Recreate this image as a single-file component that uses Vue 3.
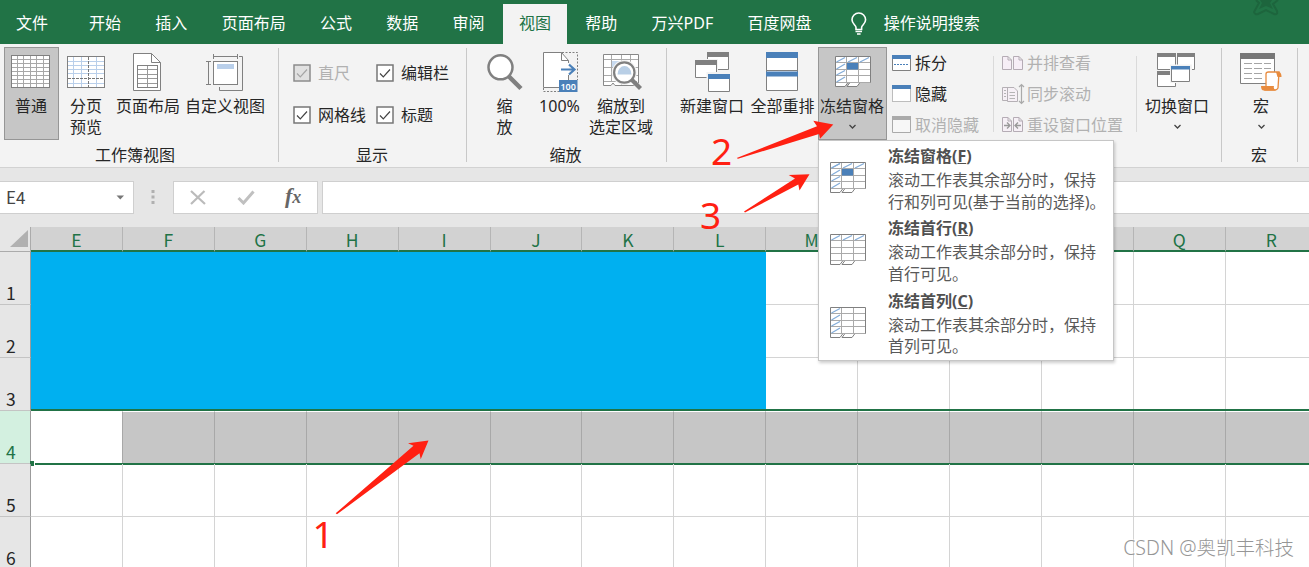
<template>
    <div class="excel">
        <div class="tabs">
            <span
            v-for="tab in tabs"
            :key="tab"
            class="tabs__item"
            :class="{ 'tabs__item--active': tab === activeTab, 'tabs__item--file': tab === '文件' }"
            @click="activeTab = tab"
            >{{ tab }}</span>
            <svg class="tabs__bulb" width="18" height="24" viewBox="0 0 18 24">
                <path d="M6 17.5V15.5C6 13 2 12 2 7.800A6.800 6.800 0 0 1 15.600 7.800C15.600 12 11.600 13 11.600 15.500V17.500Z" fill="none" stroke="#fff" stroke-width="1.600" />
                <path d="M5.500 19.500H12M7 22H10.600" stroke="#fff" stroke-width="1.600" />
            </svg>
            <span class="tabs__search">操作说明搜索</span>
            <svg class="tabs__star" width="34" height="16" viewBox="0 0 34 16">
                <path d="M7 0L10 3L5 12Q6 15 9 14L17 10L25 14Q29 15 28 11L24 4L29 0" fill="none" stroke="#1d653d" stroke-width="2" />
                <path d="M11 0L13 3L10 9L17 6L24 9L21 3L23 0Z" fill="#1d653d" />
            </svg>
        </div>

        <div class="ribbon">
            <!-- 工作簿视图 -->
            <div class="group group--views">
                <div class="group__body">
                    <button class="tool tool--active w55">
                        <svg width="55" height="48" viewBox="0 0 55 48">
                            <rect x="7.500" y="8.500" width="38" height="32" fill="#fff" stroke="#808080" />
                            <path d="M13.500 9V40M19.500 9V40M26.500 9V40M32.500 9V40M39.500 9V40M8 12.500H45M8 16.500H45M8 20.500H45M8 24.500H45M8 28.500H45M8 32.500H45M8 36.500H45" stroke="#a8a8a8" />
                        </svg>
                        <span>普通</span>
                    </button>
                    <button class="tool w54">
                        <svg width="54" height="48" viewBox="0 0 54 48">
                            <rect x="8.500" y="9.500" width="37" height="31" fill="#fff" stroke="#808080" />
                            <path d="M14.500 10V40M22.500 10V40M37.500 10V40M9 14.500H45M9 18.500H45M9 22.500H45M9 26.500H45M9 36.500H45" stroke="#b9cfea" />
                            <path d="M29.500 10V40M9 31.500H45" stroke="#777" stroke-dasharray="3 1" />
                        </svg>
                        <span>分页<br>预览</span>
                    </button>
                    <button class="tool w70">
                        <svg width="70" height="48" viewBox="0 0 70 48">
                            <path d="M20.500 6.500H38.500L47.500 15.500V43.500H20.500Z" fill="#fff" stroke="#808080" />
                            <path d="M38.500 6.500V15.500H47.500" fill="none" stroke="#808080" />
                            <rect x="24.500" y="18.500" width="20" height="22" fill="none" stroke="#808080" />
                            <path d="M34.500 19V40M25 22.500H44M25 27.500H44M25 31.500H44M25 36.500H44" stroke="#999" />
                        </svg>
                        <span>页面布局</span>
                    </button>
                    <button class="tool w84">
                        <svg width="84" height="48" viewBox="0 0 84 48">
                            <path d="M56 9.500H59.500V43.500H36.500V40" fill="none" stroke="#808080" />
                            <rect x="30.500" y="14.500" width="24" height="23" fill="#fff" stroke="#808080" />
                            <rect x="34" y="17" width="17" height="5" fill="#b9cfea" />
                            <path d="M30.500 7V12M54.500 7V12M30.500 9.500H54.500M23 14.500H28M23 37.500H28M25.500 14.500V37.500" stroke="#808080" />
                        </svg>
                        <span>自定义视图</span>
                    </button>
                </div>
                <div class="group__title">工作簿视图</div>
            </div>

            <!-- 显示 -->
            <div class="group group--show">
                <div class="group__body checks">
                    <label
                    v-for="check in checks"
                    :key="check.name"
                    class="check"
                    :class="{ 'check--off': check.disabled }"
                    >
                        <svg width="18" height="18" viewBox="0 0 18 18">
                            <rect class="check__box" x="1" y="1" width="16" height="16" stroke-width="1.500" />
                            <path class="check__mark" d="M4 9.500L7.300 12.800L14 5.500" fill="none" stroke-width="1.200" />
                        </svg>
                        <span>{{ check.name }}</span>
                    </label>
                </div>
                <div class="group__title">显示</div>
            </div>

            <!-- 缩放 -->
            <div class="group group--zoom">
                <div class="group__body">
                    <button class="tool w55">
                        <svg width="55" height="48" viewBox="0 0 55 48">
                            <path d="M31.500 29L44 41.500" stroke="#808080" stroke-width="4.500" />
                            <circle cx="23.500" cy="20.300" r="12" fill="#fff" stroke="#808080" stroke-width="2.500" />
                        </svg>
                        <span>缩<br>放</span>
                    </button>
                    <button class="tool w55">
                        <svg width="55" height="48" viewBox="0 0 55 48">
                            <path d="M11 5H30L37 13V40H11Z" fill="#fff" />
                            <path d="M27 40.500H11.500V5.500H29.500L36.500 13.500V16M29.500 5.500V13.500H36.500M36.500 28V33" fill="none" stroke="#808080" />
                            <path d="M30 5.500H45.500V33M11.500 41V44.500H27" fill="none" stroke="#808080" stroke-dasharray="2 1.500" />
                            <path d="M29 22.500H42M37 17.500L42.500 22.500L37 27.500" fill="none" stroke="#4a80b9" stroke-width="2.200" />
                            <rect x="27" y="33" width="18.500" height="12" fill="#4a80b9" />
                            <text x="36.200" y="42.500" class="icon-text">100</text>
                        </svg>
                        <span>100%</span>
                    </button>
                    <button class="tool w68">
                        <svg width="68" height="48" viewBox="0 0 68 48">
                            <path d="M16.500 7.500H51.500V36L46 38.500H28L26 36L24 38.500H16.500Z" fill="#fff" stroke="#888" />
                            <path d="M24.500 8V35M34.500 8V38M43.500 8V36M17 12.500H51M17 20.500H51M17 28.500H51M17 34.500H50" stroke="#aaa" />
                            <path d="M25 14H34V20H25Z" fill="#c7daf0" />
                            <circle cx="37.300" cy="25.500" r="12.500" fill="#f3f3f3" />
                            <path d="M44 32L53.500 41.500" stroke="#808080" stroke-width="4.200" />
                            <circle cx="37.300" cy="25.500" r="10.200" fill="#fff" stroke="#808080" stroke-width="2.200" />
                            <path d="M30.500 27.500A7 8.500 0 0 1 44.500 27.500Z" fill="#b9cfe6" />
                        </svg>
                        <span>缩放到<br>选定区域</span>
                    </button>
                </div>
                <div class="group__title">缩放</div>
            </div>

            <!-- 窗口 -->
            <div class="group group--window">
                <div class="group__body">
                    <button class="tool w70">
                        <svg width="70" height="48" viewBox="0 0 70 48">
                            <path d="M30.500 5.500H51.500V22.500H30.500Z" fill="#fff" stroke="#808080" />
                            <path d="M30 5H52V10H30Z" fill="#808080" />
                            <path d="M17 12H41V32H17Z" fill="#f3f3f3" />
                            <path d="M18.500 13.500H39.500V30.500H18.500Z" fill="#fff" stroke="#808080" />
                            <path d="M18 13H40V18H18Z" fill="#808080" />
                            <path d="M29.500 25H54V46H29.500Z" fill="#f3f3f3" />
                            <path d="M31.500 27.500H52.500V44.500H31.500Z" fill="#fff" stroke="#808080" />
                            <path d="M31 27H53V32H31Z" fill="#4a80b9" />
                        </svg>
                        <span>新建窗口</span>
                    </button>
                    <button class="tool w71">
                        <svg width="71" height="48" viewBox="0 0 71 48">
                            <path d="M19.500 5.500H50.500V43.500H19.500Z" fill="#fff" stroke="#808080" />
                            <path d="M19 5H51V11H19ZM19 24.500H51V29.500H19Z" fill="#4a80b9" />
                            <path d="M19 23.500H51" stroke="#808080" />
                        </svg>
                        <span>全部重排</span>
                    </button>
                    <button class="tool tool--active w69" @click="menuOpen = !menuOpen">
                        <svg width="69" height="48" viewBox="0 0 69 48">
                            <g transform="translate(17 9)">
                                <path d="M.5 .5H35.500V26.500H25L22 30.500H12L15 26.500H13L10 30.500H.5Z" fill="#fff" stroke="#808080" />
                                <path d="M1 26.500H35M11.500 1V26M23.500 1V26M1 6.500H35M1 13.500H35M1 19.500H35" stroke="#aaa" />
                                <path d="M1.500 6L10 1.500M13 6L22 1.500M25 6L34 1.500M1.500 13L10 8M1.500 19L10 14.500M1.500 26L10 21" stroke="#84add9" stroke-width="1.300" />
                                <path d="M12 7H23V13.500H12Z" fill="#4a80b9" />
                            </g>
                        </svg>
                        <span>冻结窗格</span>
                        <svg class="tool__chevron" width="9" height="6" viewBox="0 0 9 6"><path d="M1.500 1L4.500 4L7.500 1" /></svg>
                    </button>
                    <div class="list list--split">
                        <button class="list__item">
                            <svg width="20" height="18" viewBox="0 0 20 18">
                                <path d="M.5 1.500H18.500V16.500H.5Z" fill="#fff" stroke="#808080" />
                                <path d="M0 1H19V5H0Z" fill="#4a80b9" />
                                <path d="M2 10.500H17" stroke="#4a80b9" stroke-dasharray="2 1" />
                            </svg>
                            <span>拆分</span>
                        </button>
                        <button class="list__item">
                            <svg width="20" height="18" viewBox="0 0 20 18">
                                <path d="M.5 1.500H18.500V16.500H.5Z" fill="#fff" stroke="#808080" stroke-dasharray="1 1" />
                                <path d="M0 0H19V4H0Z" fill="#4a80b9" />
                            </svg>
                            <span>隐藏</span>
                        </button>
                        <button class="list__item list__item--off">
                            <svg width="20" height="18" viewBox="0 0 20 18">
                                <path d="M.5 1.500H18.500V16.500H.5Z" fill="#f7f7f7" stroke="#aaa" />
                                <path d="M0 0H19V4H0Z" fill="#aaa" />
                            </svg>
                            <span>取消隐藏</span>
                        </button>
                    </div>
                    <div class="list list--sync">
                        <button class="list__item list__item--off">
                            <svg width="23" height="20" viewBox="0 0 23 20">
                                <path d="M.5 3.500H6L9.500 7V16.500H.5ZM11.500 3.500H17L20.500 7V16.500H11.500ZM6 3.500V7H9.500M17 3.500V7H20.500" fill="#f6eef6" stroke="#b5acb5" />
                            </svg>
                            <span>并排查看</span>
                        </button>
                        <button class="list__item list__item--off">
                            <svg width="23" height="22" viewBox="0 0 23 22">
                                <path d="M7 4.500H.5V17.500H5M5.500 4.500H12L15.500 8V18.500H5.500Z" fill="#f6f0f6" stroke="#b5b0b5" />
                                <path d="M2 7.500H4M2 10.500H4M2 13.500H4M7.500 9.500H13M7.500 12.500H13M7.500 15.500H13" stroke="#b5b5b5" />
                                <path d="M19.500 1.500V20M17 4L19.500 1.500L22 4M17 18L19.500 20.500L22 18" fill="none" stroke="#aaa" stroke-width="1.200" />
                            </svg>
                            <span>同步滚动</span>
                        </button>
                        <button class="list__item list__item--off">
                            <svg width="23" height="20" viewBox="0 0 23 20">
                                <path d="M.5 2.500H6L9.500 6V16.500H.5ZM11.500 2.500H17L20.500 6V16.500H11.500ZM6 2.500V6H9.500M17 2.500V6H20.500" fill="#f6f0f6" stroke="#b5acb5" />
                                <path d="M2 10.500H7.500M5 7.500L8 10.500L5 13.500M19 10.500H13.500M16 7.500L13 10.500L16 13.500" fill="none" stroke="#999" stroke-width="1.300" />
                            </svg>
                            <span>重设窗口位置</span>
                        </button>
                    </div>
                    <button class="tool w80">
                        <svg width="80" height="48" viewBox="0 0 80 48">
                            <path d="M20.500 6.500H38.500V22.500H20.500ZM40.500 6.500H57.500V22.500H40.500ZM20.500 24.500H38.500V39.500H20.500Z" fill="#fff" stroke="#808080" />
                            <path d="M20 6H39V10H20ZM40 6H58V10H40ZM20 24H39V28H20Z" fill="#808080" />
                            <path d="M33 17.500H55V36H33Z" fill="#f3f3f3" />
                            <path d="M34.500 19.500H52.500V34.500H34.500Z" fill="#fff" stroke="#808080" />
                            <path d="M34 19H53V22.500H34Z" fill="#4a80b9" />
                        </svg>
                        <span>切换窗口</span>
                        <svg class="tool__chevron" width="9" height="6" viewBox="0 0 9 6"><path d="M1.500 1L4.500 4L7.500 1" /></svg>
                    </button>
                </div>
            </div>

            <!-- 宏 -->
            <div class="group group--macro">
                <div class="group__body">
                    <button class="tool w70">
                        <svg width="70" height="48" viewBox="0 0 70 48">
                            <path d="M14.500 6.500H48.500V36.500H14.500Z" fill="#fff" stroke="#808080" />
                            <path d="M14 6H49V12H14Z" fill="#777" />
                            <path d="M18 16.500H26M28 16.500H36M38 16.500H45M18 21.500H26M28 21.500H36M38 21.500H45M18 26.500H26M28 26.500H36M18 31.500H26M28 31.500H36" stroke="#a5a5a5" />
                            <path d="M40 39V27Q40 25 42.500 25H53L52 41Q51 43 49 43H39Z" fill="#fff" stroke="#e88b3e" stroke-width="1.300" />
                            <path d="M35 39H48Q47 42 50 43.500H38Q35 43.500 35 39ZM50 25H53.500Q55.500 26 55.500 30H51.500Z" fill="#e88b3e" />
                        </svg>
                        <span>宏</span>
                        <svg class="tool__chevron" width="9" height="6" viewBox="0 0 9 6"><path d="M1.500 1L4.500 4L7.500 1" /></svg>
                    </button>
                </div>
                <div class="group__title">宏</div>
            </div>

            <!-- Выпадающее меню закрепления областей -->
            <div v-if="menuOpen" class="menu">
                <div v-for="item in menuItems" :key="item.key" class="menu__item">
                    <svg class="menu__icon" width="37" height="32" viewBox="0 0 37 32">
                        <path d="M.5 .5H35.500V26.500H25L22 30.500H12L15 26.500H13L10 30.500H.5Z" fill="#fff" stroke="#808080" />
                        <path d="M1 26.500H35M11.500 1V26M23.500 1V26M1 6.500H35M1 13.500H35M1 19.500H35" stroke="#aaa" />
                        <path v-if="item.row" d="M1.500 6L10 1.500M13 6L22 1.500M25 6L34 1.500" stroke="#84add9" stroke-width="1.300" />
                        <path v-if="item.col" d="M1.500 6L10 1.500M1.500 13L10 8M1.500 19L10 14.500M1.500 26L10 21" stroke="#84add9" stroke-width="1.300" />
                        <path v-if="item.row && item.col" d="M12 7H23V13.500H12Z" fill="#4a80b9" />
                    </svg>
                    <div class="menu__text">
                        <b>{{ item.title }}(<u>{{ item.key }}</u>)</b>
                        <p>{{ item.lines[0] }}<br>{{ item.lines[1] }}</p>
                    </div>
                </div>
            </div>
        </div>

        <div class="formula">
            <div class="formula__name">
                <span>E4</span>
                <svg width="9" height="5" viewBox="0 0 9 5"><path d="M.5 .5H8L4.300 4.500Z" fill="#777" /></svg>
            </div>
            <svg class="formula__dots" width="4" height="16" viewBox="0 0 4 16">
                <path d="M.5 1H3.500V4H.5ZM.5 6.500H3.500V9.500H.5ZM.5 12H3.500V15H.5Z" fill="#b0b0b0" />
            </svg>
            <div class="formula__btns">
                <svg width="16" height="15" viewBox="0 0 16 15"><path d="M1 1L15 14M14.500 1L1 14" stroke="#bbb" stroke-width="2.200" /></svg>
                <svg width="18" height="15" viewBox="0 0 18 15"><path d="M1.500 8L6.500 13L16.500 1.500" fill="none" stroke="#c0c0c0" stroke-width="3" /></svg>
                <i>f<small>x</small></i>
            </div>
            <div class="formula__input"></div>
        </div>

        <div class="sheet">
            <div class="sheet__head">
                <div class="sheet__corner">
                    <svg width="18" height="18" viewBox="0 0 18 18"><path d="M18 0V17H0Z" fill="#b1b1b1" /></svg>
                </div>
                <div v-for="col in cols" :key="col" class="sheet__col">{{ col }}</div>
            </div>
            <div v-for="row in 6" :key="row" class="sheet__row" :class="{ 'sheet__row--selected': row === 4 }">
                <div class="sheet__num">{{ row }}</div>
                <div
                v-for="(col, i) in cols"
                :key="col"
                class="sheet__cell"
                :class="{ 'sheet__cell--blue': row < 4 && i < 8 }"
                ></div>
            </div>
        </div>

        <svg class="marks" width="1309" height="567" viewBox="0 0 1309 567">
            <path d="M833.300 124.500L813.300 120.700L817 126.300L736.700 158L738 158.700L819 134L820 138.700Z" />
            <path d="M809.500 174.300L788.700 175L795 178.500L744 211.500L745 212.500L798.300 184.500L799.500 190.500Z" />
            <path d="M428.500 440.500L408 443.300L413.500 445.800L335.700 513.300L337 514.300L419.500 453.300L420.700 459.300Z" />
            <text x="711" y="165">2</text>
            <text x="700" y="229">3</text>
            <text x="312.500" y="548">1</text>
        </svg>
        <div class="watermark">CSDN @奥凯丰科技</div>
    </div>
</template>

<script setup>
import { ref } from 'vue'

const tabs = ['文件', '开始', '插入', '页面布局', '公式', '数据', '审阅', '视图', '帮助', '万兴PDF', '百度网盘']
const activeTab = ref('视图')
const menuOpen = ref(true)

const checks = [
    { name: '直尺', disabled: true },
    { name: '编辑栏' },
    { name: '网格线' },
    { name: '标题' }
]

const menuItems = [
    { title: '冻结窗格', key: 'F', row: true, col: true, lines: ['滚动工作表其余部分时，保持', '行和列可见(基于当前的选择)。'] },
    { title: '冻结首行', key: 'R', row: true, col: false, lines: ['滚动工作表其余部分时，保持', '首行可见。'] },
    { title: '冻结首列', key: 'C', row: false, col: true, lines: ['滚动工作表其余部分时，保持', '首列可见。'] }
]

// Столбцы от E до R
const cols = 'EFGHIJKLMNOPQR'.split('')
</script>

<style>
body{
    margin: 0;
    overflow: hidden;
}
</style>

<style scoped>
.excel{
    position: relative;
    width: 1309px;
    height: 567px;
    overflow: hidden;
    background-color: #fff;
    font-family: "Noto Sans", "Noto Sans CJK SC", sans-serif;
    font-size: 16px;
    line-height: 21px;
    color: #262626;
}
.excel svg{
    display: block;
    flex-shrink: 0;
}
button{
    border: none;
    padding: 0;
    margin: 0;
    background: none;
    font: inherit;
    color: inherit;
}
/* вкладки */
.tabs{
    position: relative;
    height: 44px;
    display: flex;
    align-items: flex-end;
    background-color: #217346;
    color: #fff;
}
.tabs__item{
    height: 40px;
    line-height: 38px;
    padding: 0 16px;
    margin-right: 2.300px;
    white-space: nowrap;
}
.tabs__item--file{
    margin-right: 9px;
}
.tabs__item--active{
    background-color: #f3f3f3;
    color: #217346;
}
.tabs__bulb{
    margin: 0 16px 8px 20px;
}
.tabs__search{
    height: 40px;
    line-height: 38px;
}
.tabs__star{
    position: absolute;
    top: 0;
    right: 26px;
}
/* лента */
.ribbon{
    position: relative;
    height: 123px;
    display: flex;
    background-color: #f3f3f3;
    border-bottom: 1px solid #d2d2d2;
}
.group{
    position: relative;
    box-sizing: border-box;
    padding-top: 3px;
}
.group::after{
    content: "";
    position: absolute;
    right: 0;
    top: 4px;
    width: 1px;
    height: 114px;
    background-color: #c8c8c8;
}
.group__body{
    display: flex;
    height: 94px;
}
.group__title{
    margin-top: 4px;
    text-align: center;
}
.group--views{
    width: 279px;
    padding-left: 4px;
}
.group--views .group__title{
    padding-right: 13px;
}
.group--show{
    width: 188px;
}
.group--show .group__title{
    padding-right: 2px;
}
.group--zoom{
    width: 200px;
}
.group--zoom .group__body{
    padding-left: 10px;
}
.group--zoom .group__title{
    padding-right: 3px;
}
.group--window{
    width: 555px;
}
.group--window .group__body{
    padding-left: 10px;
}
.group--macro{
    width: 76px;
}
.group--macro .group__body{
    padding-left: 4px;
}
.group--macro .group__title{
    padding-right: 2px;
}
.tool{
    height: 93px;
    display: flex;
    flex-direction: column;
    align-items: center;
    flex-shrink: 0;
    white-space: nowrap;
}
.tool > span{
    padding-top: 1px;
}
.tool--active{
    background-color: #c6c6c6;
    box-shadow: inset 0 0 0 1px #969696;
}
.tool--active > span{
    margin-left: -1px;
}
.tool__chevron{
    margin-top: 7px;
}
.tool__chevron path{
    fill: none;
    stroke: #444;
    stroke-width: 1.300;
}
.w54{ width: 54px; }
.w55{ width: 55px; }
.w68{ width: 68px; }
.w69{ width: 69px; }
.w70{ width: 70px; }
.w71{ width: 71px; }
.w80{ width: 80px; }
.w84{ width: 84px; }
.checks{
    display: grid;
    box-sizing: border-box;
    grid-template-columns: 83px 90px;
    grid-template-rows: 42px 42px;
    padding: 5px 0 0 14px;
}
.check{
    display: flex;
    align-items: center;
    gap: 7px;
    white-space: nowrap;
}
.check__box{
    fill: #fff;
    stroke: #777;
}
.check__mark{
    stroke: #444;
}
.check--off{
    color: #b1b1b1;
}
.check--off .check__box{
    fill: #e1e1e1;
    stroke: #8c8c8c;
}
.check--off .check__mark{
    stroke: #a5a5a5;
}
.list{
    position: relative;
    display: flex;
    flex-direction: column;
    box-sizing: border-box;
}
.list__item{
    height: 31px;
    display: flex;
    flex-shrink: 0;
    align-items: center;
    white-space: nowrap;
}
.list__item span{
    padding-top: 1px;
}
.list__item--off{
    color: #b1b1b1;
}
.list--split{
    width: 106px;
    padding-left: 5px;
}
.list--split .list__item{
    gap: 3px;
}
.list--sync{
    width: 144px;
    padding-left: 9px;
}
.list--sync::before{
    content: "";
    position: absolute;
    left: 0;
    right: 0;
    top: 9px;
    height: 76px;
    border-left: 1px solid #dadada;
    border-right: 1px solid #dadada;
}
.list--sync .list__item{
    gap: 2px;
}
/* меню */
.menu{
    position: absolute;
    z-index: 2;
    left: 818px;
    top: 96px;
    width: 294px;
    height: 218px;
    padding-top: 1px;
    background-color: #fff;
    border: 1px solid #c6c6c6;
    box-shadow: 1px 2px 3px rgba(0, 0, 0, .2);
    color: #595959;
}
.menu__item{
    height: 72.400px;
    display: flex;
}
.menu__icon{
    margin: 20px 21px 0 11px;
}
.menu__text{
    padding-top: 4px;
    white-space: nowrap;
}
.menu__text b{
    display: block;
    color: #505050;
}
.menu__text p{
    margin: 3px 0 0;
    line-height: 21.500px;
}
/* строка формул */
.formula{
    height: 59px;
    display: flex;
    box-sizing: border-box;
    padding-top: 13px;
    background-color: #e6e6e6;
}
.formula__name,
.formula__btns,
.formula__input{
    height: 33px;
    display: flex;
    align-items: center;
    box-sizing: border-box;
    background-color: #fff;
    border: 1px solid #cfcfcf;
}
.formula__name{
    width: 134px;
    justify-content: space-between;
    border-left: none;
    padding: 0 8px 0 6px;
    color: #444;
    font-family: "Noto Sans CJK SC", sans-serif;
    font-size: 17px;
}
.formula__name span{
    padding-bottom: 2px;
}
.formula__dots{
    margin: 8px 19px 0 17px;
}
.formula__btns{
    width: 145px;
    padding-left: 16px;
    gap: 31px;
    margin-left: -1px;
}
.formula__btns i{
    font: italic bold 22px "Liberation Serif", serif;
    color: #666;
    margin: -3px 0 0 -1px;
}
.formula__btns small{
    font-size: 18px;
}
.formula__input{
    flex: 1;
    margin-left: 4px;
    border-right: none;
}
/* таблица */
.sheet{
    font-family: "Noto Sans CJK SC", sans-serif;
    font-size: 17.500px;
}
.sheet__head,
.sheet__row{
    display: flex;
    position: relative;
}
.sheet__head{
    height: 25px;
    background-color: #e6e6e6;
}
.sheet__corner{
    width: 31px;
    box-sizing: border-box;
    padding: 3px 0 0 10px;
    flex-shrink: 0;
    border-right: 1px solid #ababab;
    border-bottom: 1px solid #ababab;
}
.sheet__col{
    width: 91.920px;
    flex-shrink: 0;
    box-sizing: border-box;
    border-right: 1px solid #b5b5b5;
    border-bottom: 2px solid #217346;
    background-color: #d2d2d2;
    color: #217346;
    text-align: center;
    line-height: 25px;
}
.sheet__row{
    height: 53px;
}
.sheet__num{
    width: 31px;
    box-sizing: border-box;
    flex-shrink: 0;
    display: flex;
    align-items: flex-end;
    padding-left: 6px;
    border-right: 1px solid #9b9b9b;
    border-bottom: 1px solid #c4c4c4;
    background-color: #e6e6e6;
    line-height: 23px;
}
.sheet__cell{
    width: 91.920px;
    box-sizing: border-box;
    flex-shrink: 0;
    border-right: 1px solid #d4d4d4;
    border-bottom: 1px solid #d4d4d4;
}
.sheet__cell--blue{
    background-color: #00b0f0;
    border-color: #00b0f0;
}
.sheet__row--selected .sheet__num{
    background-color: #d3f0e0;
    color: #217346;
}
.sheet__row--selected .sheet__cell{
    background-color: #c6c6c6;
    border-right-color: #a8a8a8;
    border-top: 1px solid #fff;
    border-bottom: 1px solid #fff;
}
.sheet__row--selected .sheet__cell:nth-child(2){
    background-color: #fff;
}
/* рамка выделения строки */
.sheet__row--selected::before{
    content: "";
    position: absolute;
    left: 31px;
    right: 0;
    top: -2px;
    height: 52px;
    border-top: 2px solid #217346;
    border-bottom: 2px solid #217346;
}
.sheet__row--selected::after{
    content: "";
    position: absolute;
    left: 30px;
    bottom: -2px;
    width: 4px;
    height: 5px;
    background-color: #217346;
    border-right: 1px solid #fff;
}
.marks{
    position: absolute;
    z-index: 3;
    left: 0;
    top: 0;
    fill: #ff2012;
    pointer-events: none;
}
.marks text{
    font-size: 37px;
}
.icon-text{
    font-size: 9px;
    font-weight: 600;
    text-anchor: middle;
    fill: #fff;
}
.watermark{
    position: absolute;
    right: 15px;
    bottom: 6px;
    font-size: 19.500px;
    font-weight: 300;
    line-height: 26px;
    color: #969696;
    white-space: nowrap;
    text-shadow: -1px -1px 0 #fff;
}
</style>
